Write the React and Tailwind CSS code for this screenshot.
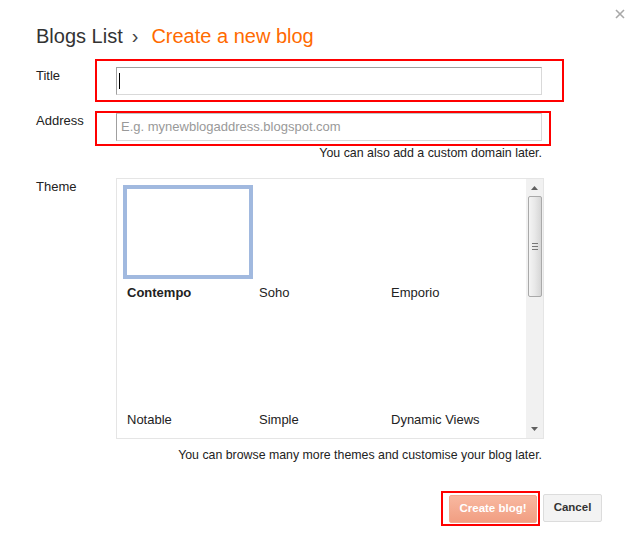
const themes = [
  { name: 'Contempo', selected: true },
  { name: 'Soho' },
  { name: 'Emporio' },
  { name: 'Notable' },
  { name: 'Simple' },
  { name: 'Dynamic Views' },
]

function Field({ label, labelPad, children, outline }) {
  return (
    <div className="grid grid-cols-[80px_1fr]">
      <div className={`text-[13px] leading-[15px] text-[#222] ${labelPad}`}>{label}</div>
      <div className="relative">
        {outline}
        {children}
      </div>
    </div>
  )
}

export default function App() {
  return (
    <div className="relative w-[633px] h-[543px] bg-white font-['Liberation_Sans',Arial,sans-serif] pl-[36px]">
      {/* close */}
      <button className="absolute top-[9px] right-[8px] w-[10px] h-[10px]">
        <svg width="10" height="10" viewBox="0 0 10 10">
          <path d="M1 1L9 9M9 1L1 9" stroke="#a8a8a8" strokeWidth="1.6" />
        </svg>
      </button>

      <div className="pt-[24px] flex items-center h-[48px] text-[20px] leading-[24px]">
        <span className="text-[#333]">Blogs List</span>
        <span className="text-[#444] ml-[9px] mr-[13px]">›</span>
        <span className="text-[#ff6a00]">Create a new blog</span>
      </div>

      <div className="mt-[19px]">
        <Field
          label="Title"
          labelPad="pt-[1px]"
          outline={<div className="absolute -left-[21px] -top-[8px] w-[469px] h-[43px] border-2 border-[#ff0000]" />}
        >
          <div className="relative w-[426px] h-[28px] border border-[#d9d9d9] border-t-[#a0a0a0] border-l-[#a0a0a0] bg-white">
            <span className="absolute left-[2px] top-[5px] w-px h-[16px] bg-black" />
          </div>
        </Field>

        <div className="mt-[18px]">
          <Field
            label="Address"
            labelPad="pt-0"
            outline={<div className="absolute -left-[21px] -top-[2px] w-[456px] h-[35px] border-2 border-[#ff0000]" />}
          >
            <div className="relative w-[426px] h-[28px] border border-[#d9d9d9] border-t-[#c4c4c4] border-l-[#a0a0a0] bg-white flex items-center pl-[4px] text-[13px] text-[#999]">
              E.g. mynewblogaddress.blogspot.com
            </div>
            <div className="w-[426px] text-right text-[12.4px] leading-[14px] text-[#222] mt-[5px]">
              You can also add a custom domain later.
            </div>
          </Field>
        </div>

        <div className="mt-[18px]">
          <Field label="Theme" labelPad="pt-[1px]">
            <div className="w-[428px] h-[261px] border border-[#e5e5e5] flex">
              <div className="flex-1 grid grid-cols-[132px_132px_132px] content-start gap-y-[12px] pl-[6px] pt-[6px]">
                {themes.map((t) => (
                  <div key={t.name} className="flex flex-col">
                    <div
                      className={`w-[130px] h-[94px] ${t.selected ? 'border-4 border-[#a1b9df]' : ''}`}
                    />
                    <div
                      className={`mt-[6px] pl-[4px] text-[13px] leading-[15px] text-[#222] ${t.selected ? 'font-bold' : ''}`}
                    >
                      {t.name}
                    </div>
                  </div>
                ))}
              </div>
              <div className="w-[17px] bg-[#f1f1f1] flex flex-col items-center">
                <svg width="7" height="4" viewBox="0 0 7 4" className="mt-[7px]">
                  <path d="M0 4L3.5 0L7 4Z" fill="#606060" />
                </svg>
                <div className="mt-[6px] w-[14px] h-[101px] rounded-[2px] border border-[#a9a9a9] bg-gradient-to-r from-[#f4f4f4] via-[#e8e8e8] to-[#d6d6d6] flex items-center justify-center">
                  <div className="flex flex-col gap-[2px]">
                    <span className="block w-[6px] h-px bg-[#777]" />
                    <span className="block w-[6px] h-px bg-[#777]" />
                    <span className="block w-[6px] h-px bg-[#777]" />
                  </div>
                </div>
                <svg width="7" height="4" viewBox="0 0 7 4" className="mt-auto mb-[7px]">
                  <path d="M0 0L7 0L3.5 4Z" fill="#606060" />
                </svg>
              </div>
            </div>
            <div className="w-[426px] text-right text-[12.35px] leading-[14px] text-[#222] mt-[9px]">
              You can browse many more themes and customise your blog later.
            </div>
          </Field>
        </div>
      </div>

      <div className="mt-[32px] flex justify-end gap-[6px] pr-[31px]">
        <div className="relative">
          <div className="absolute -left-[8px] -right-[3px] -top-[3px] -bottom-[3px] border-2 border-[#ff0000]" />
          <button className="relative w-[88px] h-[28px] mt-px border border-[#f2ab90] bg-gradient-to-b from-[#f8b8a0] to-[#f19e82] text-white text-[11.5px] font-bold rounded-[2px]">
            Create blog!
          </button>
        </div>
        <button className="w-[59px] h-[28px] border border-[#dcdcdc] bg-[#f3f3f3] text-[#333] text-[11.5px] font-bold rounded-[2px]">
          Cancel
        </button>
      </div>
    </div>
  )
}
